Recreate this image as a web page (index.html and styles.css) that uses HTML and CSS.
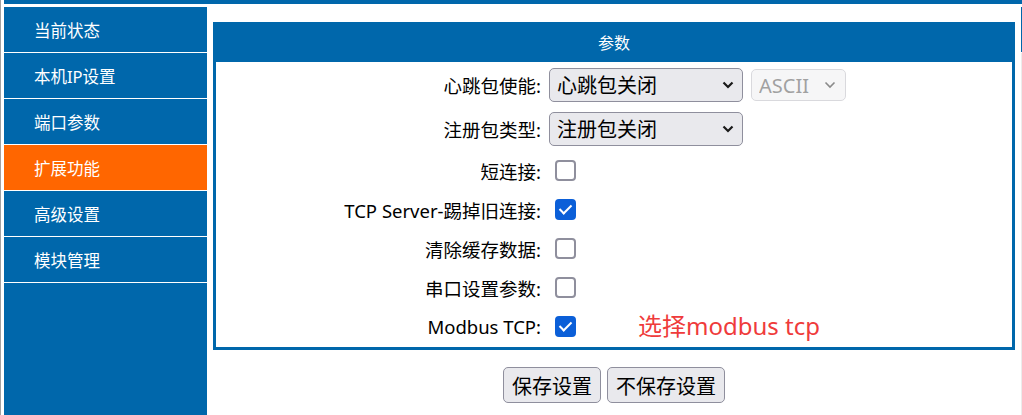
FILE: index.html
```html
<!DOCTYPE html>
<html lang="zh-CN">
<head>
    <meta charset="UTF-8">
    <meta name="viewport" content="width=device-width, initial-scale=1.0">
    <title>扩展功能</title>
    <link rel="stylesheet" href="styles.css">
</head>
<body>
    <div class="page">
        <div class="edge"></div>
        <div class="frame">
            <div class="topbar"></div>
            <div class="layout">
                <ul class="menu">
                    <li><a href="#">当前状态</a></li>
                    <li><a href="#">本机IP设置</a></li>
                    <li><a href="#">端口参数</a></li>
                    <li class="active"><a href="#">扩展功能</a></li>
                    <li><a href="#">高级设置</a></li>
                    <li><a href="#">模块管理</a></li>
                </ul>
                <div class="main">
                    <form class="panel">
                        <div class="panel-head">参数</div>
                        <div class="panel-body">
                            <div class="row sel">
                                <label class="label">心跳包使能:</label>
                                <div class="ctrl">
                                    <div class="select wide">
                                        <select>
                                            <option>心跳包关闭</option>
                                        </select>
                                        <svg class="chev" width="12" height="8" viewBox="0 0 12 8"><polyline points="1.5,1.5 6,6 10.5,1.5" fill="none" stroke="#1a1a1a" stroke-width="2.2"/></svg>
                                    </div>
                                    <div class="select narrow off">
                                        <select disabled>
                                            <option>ASCII</option>
                                        </select>
                                        <svg class="chev" width="12" height="8" viewBox="0 0 12 8"><polyline points="1.5,1.5 6,6 10.5,1.5" fill="none" stroke="#8a8a8a" stroke-width="1.6"/></svg>
                                    </div>
                                </div>
                            </div>
                            <div class="row sel">
                                <label class="label">注册包类型:</label>
                                <div class="ctrl">
                                    <div class="select wide">
                                        <select>
                                            <option>注册包关闭</option>
                                        </select>
                                        <svg class="chev" width="12" height="8" viewBox="0 0 12 8"><polyline points="1.5,1.5 6,6 10.5,1.5" fill="none" stroke="#1a1a1a" stroke-width="2.2"/></svg>
                                    </div>
                                </div>
                            </div>
                            <div class="row chk">
                                <label class="label">短连接:</label>
                                <div class="ctrl"><input type="checkbox"></div>
                            </div>
                            <div class="row chk">
                                <label class="label">TCP Server-踢掉旧连接:</label>
                                <div class="ctrl"><input type="checkbox" checked></div>
                            </div>
                            <div class="row chk">
                                <label class="label">清除缓存数据:</label>
                                <div class="ctrl"><input type="checkbox"></div>
                            </div>
                            <div class="row chk">
                                <label class="label">串口设置参数:</label>
                                <div class="ctrl"><input type="checkbox"></div>
                            </div>
                            <div class="row chk">
                                <label class="label">Modbus TCP:</label>
                                <div class="ctrl">
                                    <input type="checkbox" checked>
                                    <span class="note">选择modbus tcp</span>
                                </div>
                            </div>
                        </div>
                    </form>
                    <div class="actions">
                        <button type="button">保存设置</button>
                        <button type="button">不保存设置</button>
                    </div>
                </div>
                <div class="strip"></div>
            </div>
        </div>
    </div>
</body>
</html>
```

FILE: styles.css
```css
body {
    margin: 0;
    padding: 0;
    font-family: "Noto Sans", "Noto Sans CJK SC", sans-serif;
    color: #000;
    background: #fff;
}
.page {
    display: flex;
    height: 415px;
    overflow: hidden;
}
.edge {
    width: 1px;
    background: #a0a0a0;
}
.frame {
    flex: 1;
    margin-left: 3px;
    display: flex;
    flex-direction: column;
}
.topbar {
    height: 4px;
    background: #0067ab;
}
.layout {
    flex: 1;
    display: flex;
}
.menu {
    list-style: none;
    margin: 3px 0 0 0;
    padding: 0;
    width: 203px;
    background: #0067ab;
}
.menu li a {
    display: flex;
    align-items: center;
    height: 45px;
    padding-left: 30px;
    border-bottom: 1px solid #fff;
    color: #fff;
    font-size: 16.5px;
    text-decoration: none;
}
.menu li.active a {
    background: #ff6600;
}
.main {
    flex: 1;
    padding: 18px 6px 0 6px;
}
.strip {
    width: 1px;
    margin-top: 3px;
    background: linear-gradient(#0067ab 0 45px, #fff 45px 46px, #ececec 46px);
}
.panel {
    margin: 0;
    border: 3px solid #0067ab;
}
.panel-head {
    height: 37px;
    line-height: 37px;
    background: #0067ab;
    color: #fff;
    text-align: center;
    font-size: 16px;
}
.panel-body {
    padding: 1px 0;
}
.row {
    display: grid;
    grid-template-columns: 325px 1fr;
    column-gap: 8px;
    align-items: center;
}
.row.sel {
    height: 44px;
}
.row.chk {
    height: 39px;
}
.label {
    text-align: right;
    font-size: 18.5px;
}
.ctrl {
    display: flex;
    align-items: center;
    gap: 8px;
}
.select {
    position: relative;
}
.select select {
    appearance: none;
    -webkit-appearance: none;
    display: block;
    width: 100%;
    height: 34px;
    margin: 0;
    padding: 0 28px 0 7px;
    font-family: inherit;
    font-size: 20px;
    color: #000;
    background: #e9e9ed;
    border: 1px solid #8f8f9d;
    border-radius: 5px;
}
.select.wide {
    width: 194px;
}
.select.narrow {
    width: 95px;
}
.select.off select {
    height: 32px;
    padding-left: 7px;
    color: #7a7a7a;
    background: #f3f3f5;
    border-color: #cacad0;
}
.chev {
    position: absolute;
    right: 9px;
    top: 50%;
    margin-top: -4px;
    pointer-events: none;
}
.off .chev {
    right: 10px;
}
.ctrl input[type="checkbox"] {
    appearance: none;
    -webkit-appearance: none;
    position: relative;
    width: 21px;
    height: 21px;
    margin: 0 0 0 6px;
    border: 2px solid #8f8f9d;
    border-radius: 4px;
    background: #fff;
    box-sizing: border-box;
}
.ctrl input[type="checkbox"]:checked {
    background: #0b5fd8;
    border-color: #0b5fd8;
}
.ctrl input[type="checkbox"]:checked::after {
    content: "";
    position: absolute;
    left: 5px;
    top: 1px;
    width: 5px;
    height: 10px;
    border-right: 2.5px solid #fff;
    border-bottom: 2.5px solid #fff;
    transform: rotate(45deg);
}
.note {
    margin-left: 54px;
    font-size: 24px;
    color: #ef3b3b;
    position: relative;
    top: -2px;
}
.actions {
    display: flex;
    justify-content: center;
    gap: 6px;
    margin-top: 17px;
}
.actions button {
    height: 36px;
    padding: 0 8px;
    font-family: inherit;
    font-size: 20px;
    color: #000;
    background: #e9e9ed;
    border: 1px solid #8f8f9d;
    border-radius: 5px;
}
```
